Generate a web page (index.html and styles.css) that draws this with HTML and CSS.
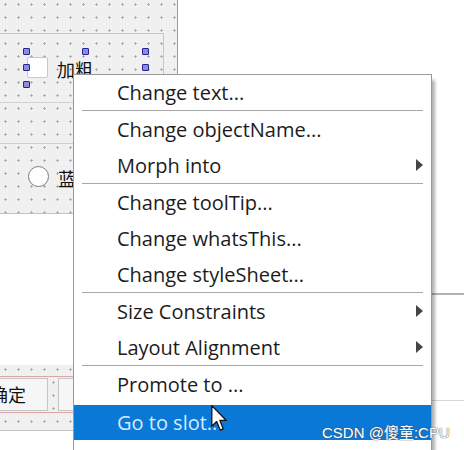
FILE: index.html
```html
<!DOCTYPE html>
<html>
<head>
<meta charset="utf-8">
<link rel="stylesheet" href="styles.css">
</head>
<body>
<div class="stage">
  <div class="leftcol">
    <div class="form dots">
      <div class="frame">
        <div class="check-row"><span class="checkbox"></span><span class="label">加粗</span></div>
      </div>
      <div class="band2"></div>
      <div class="band3">
        <div class="radio-row"><span class="radio"></span><span class="label">蓝</span></div>
      </div>
    </div>
    <div class="blank"></div>
    <div class="btnband dots">
      <div class="btnframe">
        <div class="btn ok">确定</div>
        <div class="btngap dots"></div>
        <div class="btn cancel">取消</div>
      </div>
    </div>
  </div>
  <div class="rightpanel"><div class="rp-inner"></div></div>

  <span class="handle h1"></span>
  <span class="handle h2"></span>
  <span class="handle h3"></span>
  <span class="handle h4"></span>
  <span class="handle h5"></span>
  <span class="handle h6"></span>

  <div class="menu">
    <div class="item first">Change text...</div>
    <div class="sep"></div>
    <div class="item">Change objectName...</div>
    <div class="item">Morph into<span class="arrow"></span></div>
    <div class="sep"></div>
    <div class="item">Change toolTip...</div>
    <div class="item">Change whatsThis...</div>
    <div class="item">Change styleSheet...</div>
    <div class="sep"></div>
    <div class="item">Size Constraints<span class="arrow"></span></div>
    <div class="item">Layout Alignment<span class="arrow"></span></div>
    <div class="sep"></div>
    <div class="item">Promote to ...</div>
    <div class="item active">Go to slot...</div>
  </div>

  <svg class="cursor" width="17" height="27" viewBox="0 0 13 21">
    <path d="M0.5 0.5 L0.5 16.5 L4.3 12.9 L7 19.5 L9.4 18.5 L6.8 12 L11.8 12 Z" fill="#ffffff" stroke="#111111" stroke-width="1" stroke-linejoin="round"/>
  </svg>

  <div class="watermark">CSDN @傻童:CPU</div>
</div>
</body>
</html>
```

FILE: styles.css
```css
* { box-sizing: border-box; }
html, body { margin: 0; padding: 0; background: #ffffff; }
.stage {
  position: relative;
  width: 464px;
  height: 450px;
  overflow: hidden;
  display: flex;
  background: #ffffff;
  font-family: "Noto Sans CJK SC", "Noto Sans", sans-serif;
}
.dots {
  background-color: #f0f0f0;
  background-image: radial-gradient(circle at 1.5px 1.5px, #a6a6a6 0.9px, transparent 1.4px);
  background-size: 13px 13px;
  background-position: 4px 3px;
}
.leftcol {
  width: 178px;
  display: flex;
  flex-direction: column;
  flex-shrink: 0;
}
.form {
  width: 178px;
  height: 214px;
  border-right: 1px solid #9c9c9c;
  border-bottom: 1px solid #c4c4c4;
  padding-top: 33px;
}
.frame {
  width: 164px;
  height: 70px;
  border-top: 1px solid #c6c6c6;
  border-right: 1px solid #c6c6c6;
  border-bottom: 1px solid #d2d2d2;
  padding-top: 23px;
}
.check-row, .radio-row {
  display: flex;
  align-items: center;
  height: 20px;
}
.checkbox {
  width: 21px;
  height: 21px;
  margin-left: 27px;
  background: #ffffff;
  border: 1px solid #c8c8c8;
  border-radius: 2px;
}
.label {
  margin-left: 9px;
  font-size: 18px;
  line-height: 20px;
  color: #111111;
  margin-top: 3px;
}
.band2 {
  height: 41px;
  border-bottom: 1px solid #d0d0d0;
}
.band3 {
  padding-top: 22px;
}
.radio {
  width: 21px;
  height: 21px;
  margin-left: 28px;
  border-radius: 50%;
  background: #ffffff;
  border: 1px solid #7c7c7c;
}
.radio-row .label { margin-left: 9px; }
.blank { height: 151px; }
.btnband {
  height: 66px;
  padding-top: 11px;
  border-bottom: 1px solid #c4c4c4;
  border-right: 1px solid #c4c4c4;
}
.btnframe {
  display: flex;
  height: 37px;
  border-top: 1px solid #dca6a6;
  border-bottom: 1px solid #dca6a6;
  padding-top: 1px;
}
.btn {
  height: 33px;
  background: #f6f6f6;
  border: 1px solid #c6c6c6;
  font-size: 18px;
  line-height: 31px;
  color: #111111;
  white-space: nowrap;
  overflow: hidden;
  display: flex;
  justify-content: flex-end;
}
.ok { width: 48px; padding-right: 21px; border-left: none; }
.btngap { width: 10px; }
.cancel { width: 80px; justify-content: center; }
.rightpanel {
  margin-left: auto;
  width: 200px;
  margin-top: 293px;
  border-top: 2px solid #b2b2b2;
  align-self: flex-start;
}
.rp-inner {
  height: 106px;
  border-bottom: 1px solid #d6d6d6;
}
.handle {
  position: absolute;
  width: 7px;
  height: 7px;
  background: #8c8cd8;
  border: 1.5px solid #22229a;
  border-radius: 1px;
}
.h1 { left: 23px; top: 48px; }
.h2 { left: 82px; top: 48px; }
.h3 { left: 142px; top: 48px; }
.h4 { left: 23px; top: 64px; }
.h5 { left: 142px; top: 64px; }
.h6 { left: 23px; top: 81px; }
.menu {
  position: absolute;
  left: 73px;
  top: 74px;
  width: 359px;
  height: 420px;
  background: #ffffff;
  border: 1px solid #9a9a9a;
  box-shadow: 3px 6px 3px rgba(0, 0, 0, 0.3);
  font-family: "Open Sans", "Noto Sans", sans-serif;
  font-size: 20px;
  color: #1c1c1c;
}
.item {
  height: 36px;
  padding: 0 8px 0 43px;
  display: flex;
  align-items: center;
  justify-content: space-between;
  white-space: nowrap;
}
.item.first { height: 35px; }
.sep {
  height: 1px;
  margin: 0 8px;
  background: #a8a8a8;
}
.arrow {
  width: 0;
  height: 0;
  border-left: 7px solid #454545;
  border-top: 6px solid transparent;
  border-bottom: 6px solid transparent;
}
.item.active {
  margin-top: 3px;
  height: 35px;
  background: #0a78d6;
  color: #d6ebff;
}
.cursor {
  position: absolute;
  left: 211px;
  top: 405px;
}
.watermark {
  position: absolute;
  left: 322px;
  top: 421px;
  font-family: "Liberation Sans", "Noto Sans CJK SC", sans-serif;
  font-size: 15px;
  color: #ffffff;
  text-shadow: 0 0 1px #555555, 0 0 1px #555555;
  white-space: nowrap;
}
```
